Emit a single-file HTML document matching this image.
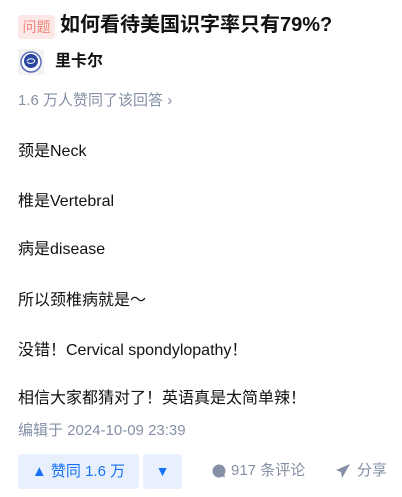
<!DOCTYPE html>
<html><head><meta charset="utf-8"><style>
body{margin:0;width:402px;height:497px;background:#fff;font-family:"Liberation Sans","Noto Sans CJK SC",sans-serif;color:#121212;position:relative;overflow:hidden}
.a{position:absolute;white-space:nowrap}
.tag{left:18px;top:15px;width:37px;height:24px;background:#fde8e8;color:#f1857a;border-radius:3px;font-size:14px;line-height:24px;text-align:center}
.title{left:60px;top:12px;font-size:20px;font-weight:bold;line-height:26px}
.p{left:18px;font-size:16px;line-height:20px}
.gray{color:#8590a6;font-size:15px}
</style></head><body>
<div class="a tag">问题</div>
<div class="a title">如何看待美国识字率只有79%?</div>
<div class="a" style="left:18px;top:49px;width:26px;height:26px;background:#f3f3f3;border-radius:2px">
<svg width="26" height="26" viewBox="0 0 26 26"><circle cx="13" cy="13" r="10" fill="#fff" stroke="#5a6fb8" stroke-width="1.5"/><circle cx="13" cy="12" r="7" fill="#2b46a0"/><path d="M9 12c2-3 6-3 8 0M9 13c2 2 6 2 8-1" stroke="#fff" stroke-width="1" fill="none"/></svg></div>
<div class="a" style="left:55px;top:51px;font-size:16px;font-weight:bold;line-height:22px;color:#121212">里卡尔</div>
<div class="a gray" style="left:18px;top:91px;line-height:20px">1.6 万人赞同了该回答 ›</div>
<div class="a p" style="top:142px">颈是Neck</div>
<div class="a p" style="top:192px">椎是Vertebral</div>
<div class="a p" style="top:240px">病是disease</div>
<div class="a p" style="top:291px">所以颈椎病就是～</div>
<div class="a p" style="top:341px">没错！Cervical spondylopathy！</div>
<div class="a p" style="top:389px">相信大家都猜对了！英语真是太简单辣！</div>
<div class="a gray" style="left:18px;top:421px;line-height:20px">编辑于 2024-10-09 23:39</div>
<div class="a" style="left:18px;top:454px;width:121px;height:35px;background:#e8f0fd;border-radius:3px;color:#1772f6;font-size:15px;line-height:35px;text-align:center">▲ 赞同 1.6 万</div>
<div class="a" style="left:143px;top:454px;width:39px;height:35px;background:#e8f0fd;border-radius:3px;color:#1772f6;font-size:14px;line-height:35px;text-align:center">▼</div>
<svg class="a" style="left:211px;top:463px" width="16" height="16" viewBox="0 0 16 16"><path d="M8 1.5a6.5 6.5 0 1 0 3.5 12l2.5.9-.8-2.6A6.5 6.5 0 0 0 8 1.5z" fill="#8590a6"/></svg>
<div class="a gray" style="left:231px;top:461px;line-height:20px">917 条评论</div>
<svg class="a" style="left:335px;top:463px" width="16" height="16" viewBox="0 0 16 16"><path d="M15 1L1 7l5 2 1 6 8-14z" fill="#8590a6"/></svg>
<div class="a gray" style="left:357px;top:461px;line-height:20px">分享</div>
</body></html>
